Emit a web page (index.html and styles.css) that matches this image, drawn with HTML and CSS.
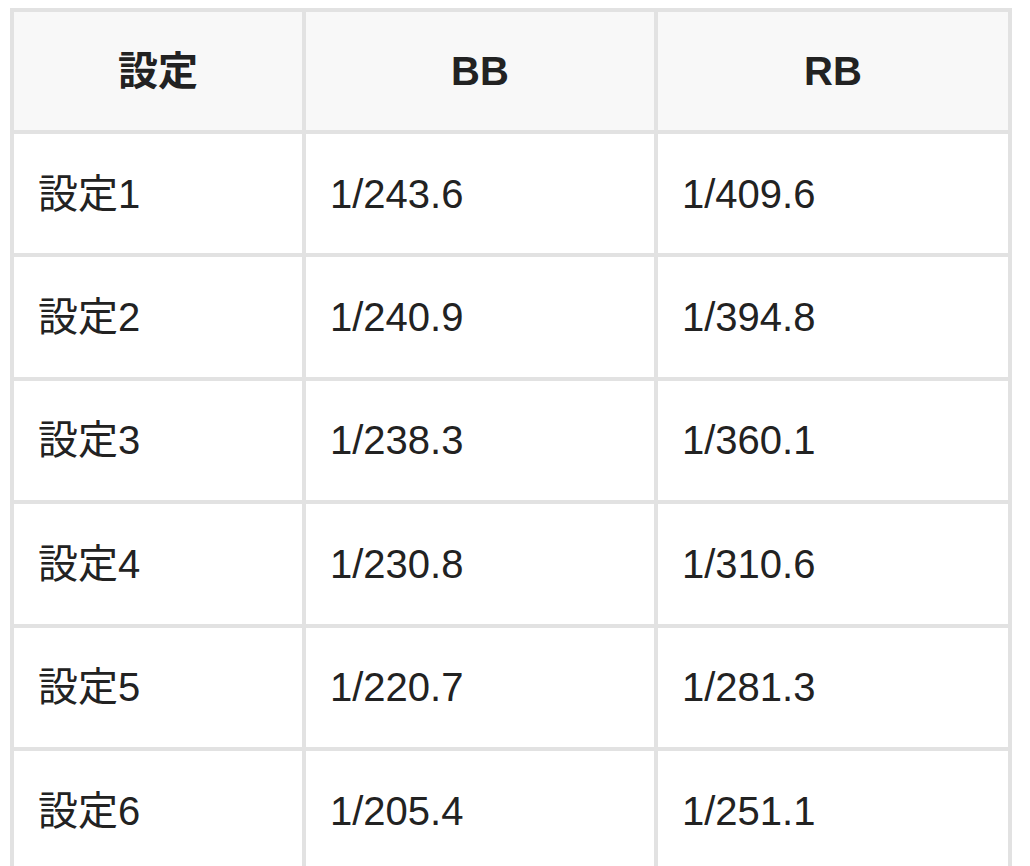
FILE: index.html
```html
<!DOCTYPE html>
<html lang="ja">
<head>
<meta charset="utf-8">
<link rel="stylesheet" href="styles.css">
</head>
<body>
<table class="rate-table">
  <colgroup>
    <col class="c1"><col class="c2"><col class="c3">
  </colgroup>
  <thead>
    <tr><th>設定</th><th>BB</th><th>RB</th></tr>
  </thead>
  <tbody>
    <tr><td>設定1</td><td>1/243.6</td><td>1/409.6</td></tr>
    <tr><td>設定2</td><td>1/240.9</td><td>1/394.8</td></tr>
    <tr><td>設定3</td><td>1/238.3</td><td>1/360.1</td></tr>
    <tr><td>設定4</td><td>1/230.8</td><td>1/310.6</td></tr>
    <tr><td>設定5</td><td>1/220.7</td><td>1/281.3</td></tr>
    <tr><td>設定6</td><td>1/205.4</td><td>1/251.1</td></tr>
  </tbody>
</table>
</body>
</html>
```

FILE: styles.css
```css
html, body {
  margin: 0;
  padding: 0;
  background: #ffffff;
}
body {
  padding: 8px 10px 0 10px;
  font-family: "Liberation Sans", "Noto Sans CJK JP", sans-serif;
  color: #222222;
}
.rate-table {
  border-collapse: collapse;
  table-layout: fixed;
  width: 1002px;
  font-size: 40px;
}
.c1 { width: 292px; }
.c2 { width: 352px; }
.c3 { width: 354px; }
.rate-table th,
.rate-table td {
  border: 4px solid #e2e2e2;
  line-height: 60px;
  padding: 29.7px 24px 29.7px 24px;
  text-align: left;
  font-weight: normal;
}
.rate-table th {
  background: #f8f8f8;
  text-align: center;
  font-weight: bold;
  padding-top: 29px;
  padding-bottom: 29px;
}
```
